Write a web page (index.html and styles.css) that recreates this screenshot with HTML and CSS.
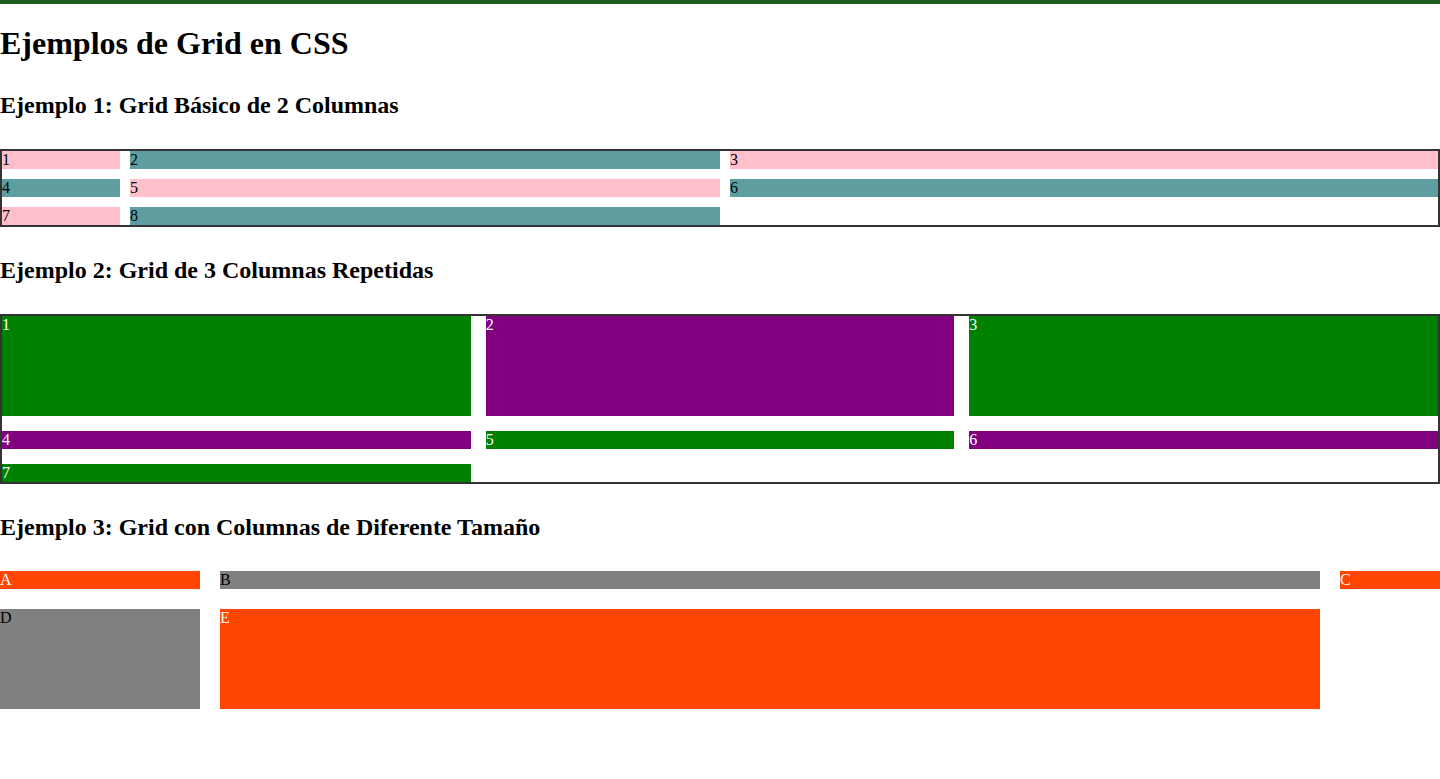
FILE: index.html
```html
<!DOCTYPE html>
<html lang="es">
<head>
<meta charset="utf-8">
<title>Ejemplos de Grid en CSS</title>
<link rel="stylesheet" href="styles.css">
</head>
<body>
<h1>Ejemplos de Grid en CSS</h1>

<h2>Ejemplo 1: Grid Básico de 2 Columnas</h2>
<div class="grid grid-basic">
  <div class="item pink">1</div>
  <div class="item teal">2</div>
  <div class="item pink">3</div>
  <div class="item teal">4</div>
  <div class="item pink">5</div>
  <div class="item teal">6</div>
  <div class="item pink">7</div>
  <div class="item teal">8</div>
</div>

<h2>Ejemplo 2: Grid de 3 Columnas Repetidas</h2>
<div class="grid grid-repeat">
  <div class="item green">1</div>
  <div class="item purple">2</div>
  <div class="item green">3</div>
  <div class="item purple">4</div>
  <div class="item green">5</div>
  <div class="item purple">6</div>
  <div class="item green">7</div>
</div>

<h2>Ejemplo 3: Grid con Columnas de Diferente Tamaño</h2>
<div class="grid grid-sizes">
  <div class="item orange">A</div>
  <div class="item gray">B</div>
  <div class="item orange">C</div>
  <div class="item gray">D</div>
  <div class="item orange">E</div>
</div>
</body>
</html>
```

FILE: styles.css
```css
html, body {
  margin: 0;
  padding: 0;
}

body {
  font-family: "Liberation Serif", "Times New Roman", serif;
  font-size: 16px;
  color: #000;
  background: #fff;
  border-top: 4px solid #1b5e20;
}

h1 {
  font-size: 32px;
  font-weight: bold;
  margin: 21px 0 30px;
}

h2 {
  font-size: 24px;
  font-weight: bold;
  margin: 30px 0;
}

.grid {
  display: grid;
  margin: 30px 0;
}

.item {
  line-height: 18px;
}

.grid-basic {
  border: 2px solid #333;
  grid-template-columns: 1fr 5fr 6fr;
  gap: 10px;
}

.grid-repeat {
  border: 2px solid #333;
  grid-template-columns: repeat(3, 1fr);
  grid-template-rows: 100px;
  gap: 15px;
}

.grid-sizes {
  grid-template-columns: 200px 1fr 100px;
  grid-template-rows: auto 100px;
  gap: 20px;
}

.pink { background: pink; color: #000; }
.teal { background: cadetblue; color: #000; }
.green { background: green; color: #fff; }
.purple { background: purple; color: #fff; }
.orange { background: orangered; color: #fff; }
.gray { background: gray; color: #000; }
```
